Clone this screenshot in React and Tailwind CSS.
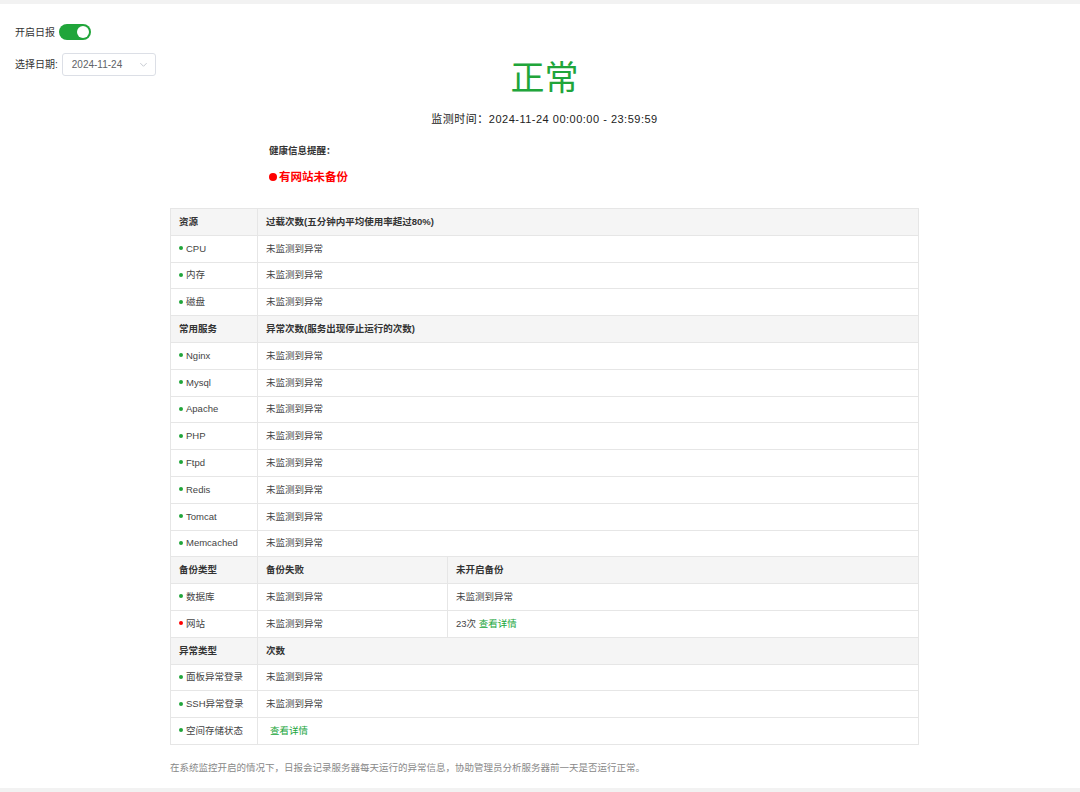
import { useState } from "react";

const font = { fontFamily: '"Liberation Sans", "Noto Sans CJK SC", sans-serif' };

const sections = [
    {
        head: ["资源", "过载次数(五分钟内平均使用率超过80%)"],
        rows: [["CPU"], ["内存"], ["磁盘"]],
    },
    {
        head: ["常用服务", "异常次数(服务出现停止运行的次数)"],
        rows: [
            ["Nginx"],
            ["Mysql"],
            ["Apache"],
            ["PHP"],
            ["Ftpd"],
            ["Redis"],
            ["Tomcat"],
            ["Memcached"],
        ],
    },
];

function Dot({ red }) {
    return (
        <span
            className={
                "inline-block w-[4px] h-[4px] rounded-full mr-[3px] align-middle relative -top-[1px] " +
                (red ? "bg-[#ff0000]" : "bg-[#20a53a]")
            }
        />
    );
}

function Switch() {
    const [on, setOn] = useState(true);
    return (
        <button
            onClick={() => setOn(!on)}
            className={
                "w-[32px] h-[16px] rounded-full flex items-center px-[2px] " +
                (on ? "bg-[#20a53a] justify-end" : "bg-[#dcdfe6] justify-start")
            }
        >
            <span className="w-[12px] h-[12px] rounded-full bg-white" />
        </button>
    );
}

const th = "px-[8px] h-[26.8px] text-left font-bold text-[#333] bg-[#f5f5f5] border border-[#e6e6e6]";
const td = "px-[8px] h-[26.8px] text-[#444] border border-[#e6e6e6]";

export default function App() {
    return (
        <div className="w-full h-[792px] flex flex-col bg-white overflow-hidden" style={font}>
            <div className="h-[4px] bg-[#f2f2f2]" />
            <div className="flex-1 flex">
                <div className="w-[170px] shrink-0 pl-[15px] pt-[20px] text-[10px] text-[#333]">
                    <div className="flex items-center gap-[4px] h-[16px]">
                        <span>开启日报</span>
                        <Switch />
                    </div>
                    <div className="flex items-center gap-[4px] mt-[13px]">
                        <span>选择日期:</span>
                        <div className="w-[94px] h-[23px] border border-[#dcdfe6] rounded-[3px] flex items-center justify-between pl-[9px] pr-[7px] text-[#606266]">
                            <span>2024-11-24</span>
                            <svg width="9" height="9" viewBox="0 0 10 10" fill="none">
                                <path d="M1.5 3.5 L5 7 L8.5 3.5" stroke="#c0c4cc" strokeWidth="1" />
                            </svg>
                        </div>
                    </div>
                </div>
                <div className="w-[749px] shrink-0 flex flex-col">
                    <div className="text-center text-[34px] leading-[40px] text-[#20a53a] mt-[54px]">正常</div>
                    <div className="text-center text-[11px] tracking-[0.5px] text-[#222] mt-[13px]">
                        监测时间：2024-11-24 00:00:00 - 23:59:59
                    </div>
                    <div className="pl-[99px] mt-[16px] text-[9.5px] font-bold text-[#333]">健康信息提醒：</div>
                    <div className="pl-[99px] mt-[11px] text-[11.5px] font-bold text-[#ff0000] flex items-center">
                        <span className="inline-block w-[8px] h-[8px] rounded-full bg-[#ff0000] mr-[2px]" />
                        有网站未备份
                    </div>
                    <table className="mt-[22px] w-[749px] border-collapse table-fixed text-[9.5px]">
                        <colgroup>
                            <col className="w-[87px]" />
                            <col className="w-[190px]" />
                            <col />
                        </colgroup>
                        <tbody>
                            {sections.map((s) => [
                                <tr key={s.head[0]}>
                                    <td className={th}>{s.head[0]}</td>
                                    <td className={th} colSpan={2}>
                                        {s.head[1]}
                                    </td>
                                </tr>,
                                ...s.rows.map((r) => (
                                    <tr key={r[0]}>
                                        <td className={td}>
                                            <Dot />
                                            {r[0]}
                                        </td>
                                        <td className={td} colSpan={2}>
                                            未监测到异常
                                        </td>
                                    </tr>
                                )),
                            ])}
                            <tr>
                                <td className={th}>备份类型</td>
                                <td className={th}>备份失败</td>
                                <td className={th}>未开启备份</td>
                            </tr>
                            <tr>
                                <td className={td}>
                                    <Dot />
                                    数据库
                                </td>
                                <td className={td}>未监测到异常</td>
                                <td className={td}>未监测到异常</td>
                            </tr>
                            <tr>
                                <td className={td}>
                                    <Dot red />
                                    网站
                                </td>
                                <td className={td}>未监测到异常</td>
                                <td className={td}>
                                    23次 <a className="text-[#20a53a] cursor-pointer">查看详情</a>
                                </td>
                            </tr>
                            <tr>
                                <td className={th}>异常类型</td>
                                <td className={th} colSpan={2}>
                                    次数
                                </td>
                            </tr>
                            <tr>
                                <td className={td}>
                                    <Dot />
                                    面板异常登录
                                </td>
                                <td className={td} colSpan={2}>
                                    未监测到异常
                                </td>
                            </tr>
                            <tr>
                                <td className={td}>
                                    <Dot />
                                    SSH异常登录
                                </td>
                                <td className={td} colSpan={2}>
                                    未监测到异常
                                </td>
                            </tr>
                            <tr>
                                <td className={td}>
                                    <Dot />
                                    空间存储状态
                                </td>
                                <td className={td} colSpan={2}>
                                    <a className="pl-[4px] text-[#20a53a] cursor-pointer">查看详情</a>
                                </td>
                            </tr>
                        </tbody>
                    </table>
                    <div className="mt-[16px] text-[9.5px] text-[#888]">
                        在系统监控开启的情况下，日报会记录服务器每天运行的异常信息，协助管理员分析服务器前一天是否运行正常。
                    </div>
                </div>
            </div>
            <div className="h-[4px] bg-[#f2f2f2]" />
        </div>
    );
}
